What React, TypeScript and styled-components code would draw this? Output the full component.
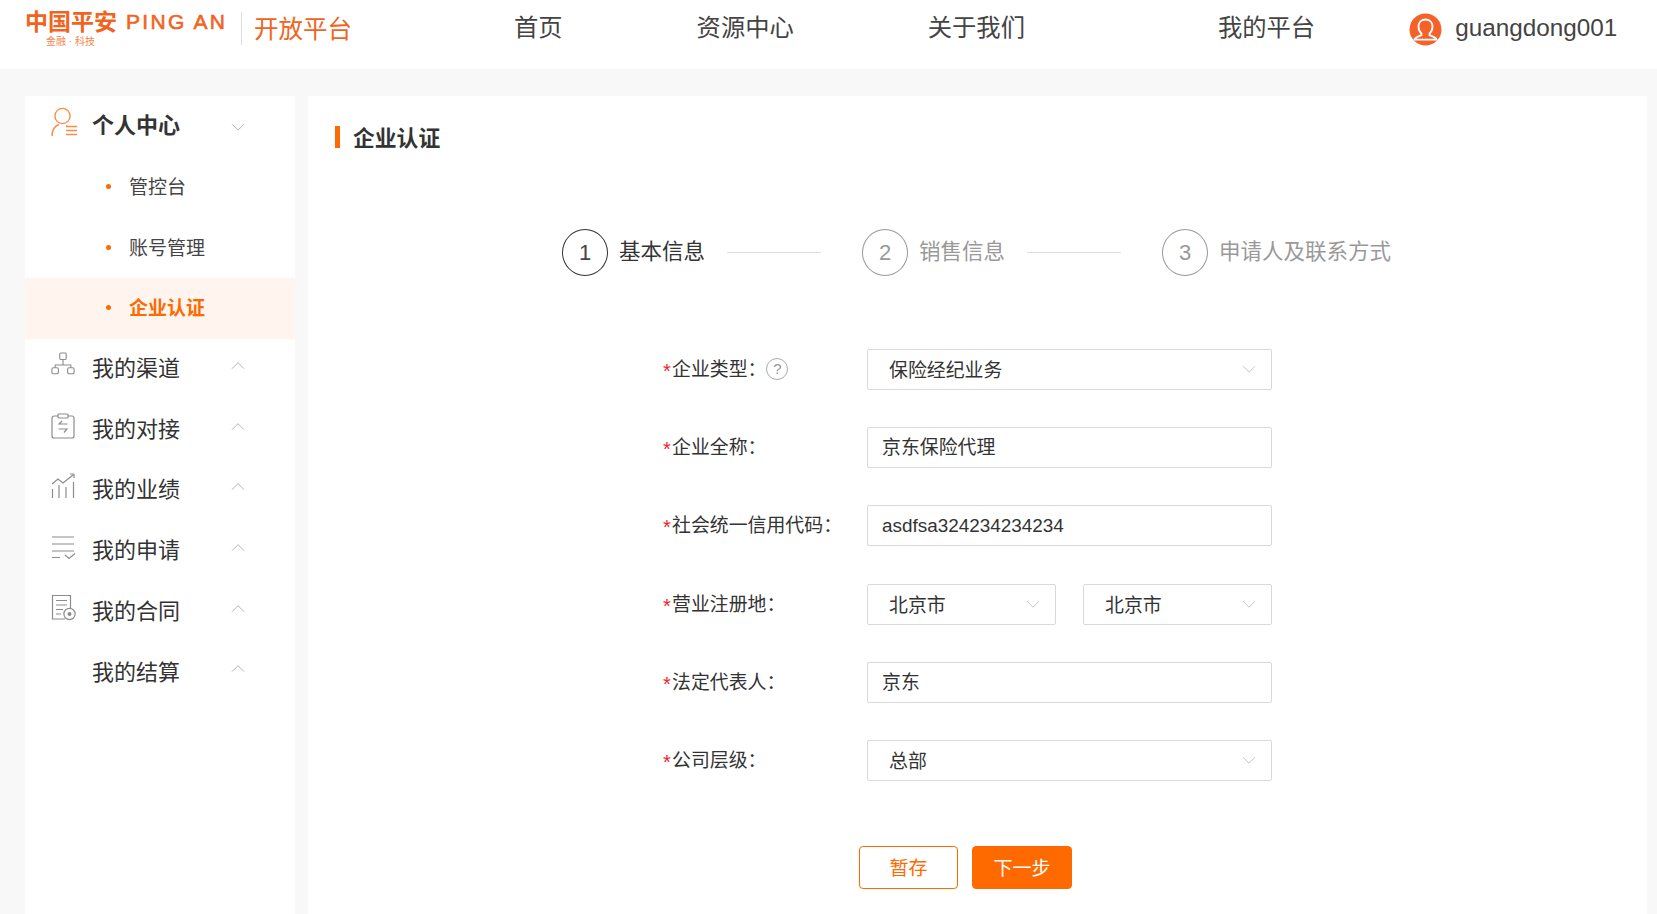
import React from "react";
import styled, { createGlobalStyle } from "styled-components";

const orange = "#ff6a00";

const GlobalStyle = createGlobalStyle`
    html, body {
        margin: 0;
        padding: 0;
        height: 100%;
        overflow: hidden;
        background: #f8f8f8;
        font-family: "Liberation Sans", "Noto Sans CJK SC", sans-serif;
        color: #333;
    }
    * { box-sizing: border-box; }
`;

const Chevron = ({ up, color = "#b4b4b4", size = 14 }: { up?: boolean; color?: string; size?: number }) => (
    <svg width={size} height={size * 0.6} viewBox="0 0 14 8" fill="none">
        <path d={up ? "M1 7.5L7 1.5L13 7.5" : "M1 1L7 7L13 1"} stroke={color} strokeWidth="1" />
    </svg>
);

const PersonIcon = () => (
    <svg width="26" height="30" viewBox="0 0 26 30" fill="none" stroke="#ff8a45" strokeWidth="1.4">
        <circle cx="11.5" cy="9" r="7.6" />
        <path d="M1 29c0-6 3-10 7-11.5" />
        <path d="M15 19h1.5M15 23.5h11M15 27.5h11M15 19.5h11" strokeWidth="1.6" />
    </svg>
);

const ChannelIcon = () => (
    <svg width="24" height="26" viewBox="0 0 26 28" fill="none" stroke="#8c8c8c" strokeWidth="1.2">
        <rect x="9.5" y="1" width="7" height="7" rx="1" />
        <path d="M13 8v6M4.5 17v-3h17v3" />
        <rect x="1" y="17" width="7" height="6.5" rx="1.5" />
        <rect x="18" y="17" width="7" height="6.5" rx="1.5" />
    </svg>
);

const ClipIcon = () => (
    <svg width="24" height="26" viewBox="0 0 24 26" fill="none" stroke="#8c8c8c" strokeWidth="1.2">
        <path d="M7 3H3a2 2 0 0 0-2 2v18a2 2 0 0 0 2 2h18a2 2 0 0 0 2-2V5a2 2 0 0 0-2-2h-4" />
        <rect x="7" y="1" width="10" height="4" rx="1" />
        <path d="M16.5 11H8l3-3M7.5 16H16l-3 3.5" />
    </svg>
);

const ChartIcon = () => (
    <svg width="25" height="26" viewBox="0 0 25 26" fill="none" stroke="#8c8c8c" strokeWidth="1.2">
        <path d="M1 11l6-5 5 4 10-8M23 1v4M19 1h4" />
        <path d="M1.5 16v9M8 12v13M15 14v11M22.5 9v16" />
    </svg>
);

const ListCheckIcon = () => (
    <svg width="25" height="25" viewBox="0 0 25 25" fill="none" stroke="#8c8c8c" strokeWidth="1.2">
        <path d="M1 2h22M1 9h22M1 16h22M1 22.5h8M14 20l4 3.5 6-5" />
    </svg>
);

const ContractIcon = () => (
    <svg width="25" height="27" viewBox="0 0 25 27" fill="none" stroke="#8c8c8c" strokeWidth="1.2">
        <path d="M14 25H1.5V1.5h18V14" />
        <path d="M5 6.5h11M5 11h11M5 15.5h7M5 20h5" />
        <circle cx="18.5" cy="20" r="5.6" />
        <circle cx="18.5" cy="20" r="2" fill="#8c8c8c" stroke="none" />
    </svg>
);

const AvatarIcon = () => (
    <svg width="33" height="33" viewBox="0 0 33 33">
        <circle cx="16.5" cy="16.5" r="16" fill="#f4622a" />
        <path
            d="M16.5 6.5c-4.4 0-7 3.2-7 7.2 0 3 1.3 5.3 3 6.8v1.6c-2.5 1-5.4 2.2-6.6 3.6l-.4 1h22l-.4-1c-1.2-1.4-4.1-2.6-6.6-3.6v-1.6c1.7-1.5 3-3.8 3-6.8 0-4-2.6-7.2-7-7.2z"
            fill="none"
            stroke="#fff"
            strokeWidth="1.8"
        />
    </svg>
);

const menuGroups = [
    { name: "我的渠道", icon: <ChannelIcon /> },
    { name: "我的对接", icon: <ClipIcon /> },
    { name: "我的业绩", icon: <ChartIcon /> },
    { name: "我的申请", icon: <ListCheckIcon /> },
    { name: "我的合同", icon: <ContractIcon /> },
    { name: "我的结算", icon: null },
];

const steps = [
    { no: 1, name: "基本信息", active: true },
    { no: 2, name: "销售信息" },
    { no: 3, name: "申请人及联系方式" },
];

const App: React.FC = () => {
    return (
        <Page>
            <GlobalStyle />
            <Header>
                <Logo>
                    <LogoMain>
                        <LogoRow>
                            <LogoCn>中国平安</LogoCn>
                            <LogoEn>PING AN</LogoEn>
                        </LogoRow>
                        <LogoSub>金融 · 科技</LogoSub>
                    </LogoMain>
                    <LogoDivider />
                    <Platform>开放平台</Platform>
                </Logo>
                <Nav>
                    <NavItem>首页</NavItem>
                    <NavItem>资源中心</NavItem>
                    <NavItem>关于我们</NavItem>
                    <NavItem wide>我的平台</NavItem>
                </Nav>
                <User>
                    <AvatarIcon />
                    <UserName>guangdong001</UserName>
                </User>
            </Header>
            <Body>
                <Sidebar>
                    <MenuRow>
                        <MenuIcon><PersonIcon /></MenuIcon>
                        <MenuTitle strong>个人中心</MenuTitle>
                        <MenuArrow><Chevron /></MenuArrow>
                    </MenuRow>
                    <SubRow><SubText>管控台</SubText></SubRow>
                    <SubRow><SubText>账号管理</SubText></SubRow>
                    <SubRow active><SubText>企业认证</SubText></SubRow>
                    {menuGroups.map((group) => (
                        <MenuRow key={group.name}>
                            <MenuIcon>{group.icon}</MenuIcon>
                            <MenuTitle>{group.name}</MenuTitle>
                            <MenuArrow up><Chevron up /></MenuArrow>
                        </MenuRow>
                    ))}
                </Sidebar>
                <Main>
                    <Title>企业认证</Title>
                    <Steps>
                        {steps.map((step, i) => (
                            <React.Fragment key={step.no}>
                                <StepCircle active={step.active}>{step.no}</StepCircle>
                                <StepName active={step.active}>{step.name}</StepName>
                                {i < steps.length - 1 && <StepLine />}
                            </React.Fragment>
                        ))}
                    </Steps>
                    <Form>
                        <FormRow>
                            <Label><Star>*</Star>企业类型：<HelpCircle>?</HelpCircle></Label>
                            <Select><SelectText>保险经纪业务</SelectText><Chevron color="#c0c4cc" /></Select>
                        </FormRow>
                        <FormRow>
                            <Label><Star>*</Star>企业全称：</Label>
                            <Input>京东保险代理</Input>
                        </FormRow>
                        <FormRow>
                            <Label><Star>*</Star>社会统一信用代码：</Label>
                            <Input>asdfsa324234234234</Input>
                        </FormRow>
                        <FormRow>
                            <Label><Star>*</Star>营业注册地：</Label>
                            <SelectPair>
                                <Select half><SelectText>北京市</SelectText><Chevron color="#c0c4cc" /></Select>
                                <Select half><SelectText>北京市</SelectText><Chevron color="#c0c4cc" /></Select>
                            </SelectPair>
                        </FormRow>
                        <FormRow>
                            <Label><Star>*</Star>法定代表人：</Label>
                            <Input>京东</Input>
                        </FormRow>
                        <FormRow>
                            <Label><Star>*</Star>公司层级：</Label>
                            <Select><SelectText>总部</SelectText><Chevron color="#c0c4cc" /></Select>
                        </FormRow>
                    </Form>
                    <Actions>
                        <Button>暂存</Button>
                        <Button primary>下一步</Button>
                    </Actions>
                </Main>
            </Body>
        </Page>
    );
};

export default App;

const Page = styled.div`
    height: 914px;
    display: flex;
    flex-direction: column;
    overflow: hidden;
`;
const Header = styled.header`
    height: 69px;
    flex: none;
    background: #fff;
    display: flex;
    align-items: center;
    padding-left: 25px;
`;
const Logo = styled.div`
    width: 489px;
    display: flex;
    align-items: flex-start;
    height: 69px;
    padding-top: 12px;
`;
const LogoMain = styled.div`
    width: 216px;
    display: flex;
    flex-direction: column;
`;
const LogoRow = styled.div`
    display: flex;
    align-items: center;
    height: 18px;
    margin-top: 1px;
    white-space: nowrap;
    color: #f0641e;
    font-weight: 700;
`;
const LogoCn = styled.span`
    font-size: 23px;
    line-height: 18px;
`;
const LogoEn = styled.span`
    margin-left: 9px;
    font-size: 21px;
    line-height: 18px;
    font-weight: 400;
    letter-spacing: 2.3px;
    -webkit-text-stroke: 0.6px #f0641e;
`;
const LogoSub = styled.div`
    margin: 5px 0 0 21px;
    font-size: 10px;
    line-height: 12px;
    color: #f2864d;
    white-space: nowrap;
`;
const LogoDivider = styled.div`
    width: 1px;
    height: 33px;
    background: #ddd;
    margin-right: 12px;
`;
const Platform = styled.div`
    font-size: 24.5px;
    line-height: 34px;
    margin-top: 1px;
    color: #f0641e;
    white-space: nowrap;
`;
const Nav = styled.nav`
    display: flex;
    gap: 134px;
    margin-bottom: 13px;
`;
const NavItem = styled.div<{ wide?: boolean }>`
    font-size: 24.3px;
    line-height: 36px;
    color: #444;
    white-space: nowrap;
    margin-left: ${(props) => (props.wide ? "59px" : "0")};
`;
const User = styled.div`
    margin-left: 94px;
    margin-bottom: 10px;
    display: flex;
    align-items: center;
    gap: 13px;
`;
const UserName = styled.div`
    font-size: 24.3px;
    color: #444;
    margin-top: -4px;
`;
const Body = styled.div`
    flex: 1;
    display: flex;
    gap: 13px;
    padding: 27px 10px 0 25px;
`;
const Sidebar = styled.aside`
    width: 270px;
    flex: none;
    background: #fff;
`;
const MenuRow = styled.div`
    height: 60.7px;
    display: flex;
    align-items: center;
    padding-right: 50px;
    padding-left: 26px;
`;
const MenuIcon = styled.div`
    width: 41px;
    height: 32px;
    flex: none;
    display: flex;
    align-items: center;
    margin-top: -8px;
`;
const MenuTitle = styled.div<{ strong?: boolean }>`
    flex: 1;
    font-size: 22px;
    line-height: 30px;
    color: #333;
    font-weight: ${(props) => (props.strong ? 700 : 400)};
`;
const MenuArrow = styled.span<{ up?: boolean }>`
    display: flex;
    margin-top: ${(props) => (props.up ? "-8px" : "1px")};
`;
const SubRow = styled.div<{ active?: boolean }>`
    height: 60.7px;
    position: relative;
    display: flex;
    align-items: center;
    padding-left: 104px;
    font-size: 19px;
    font-weight: ${(props) => (props.active ? 700 : 400)};
    color: ${(props) => (props.active ? orange : "#444")};
    background: ${(props) => (props.active ? "#fff5ee" : "transparent")};

    &::before {
        content: "";
        position: absolute;
        left: 81px;
        top: 50%;
        width: 5px;
        height: 5px;
        margin-top: -3px;
        border-radius: 50%;
        background: ${orange};
    }
`;
const SubText = styled.span`
    margin-top: -3px;
`;
const Main = styled.main`
    flex: 1;
    background: #fff;
    padding-top: 30px;
`;
const Title = styled.h2`
    margin: 0 0 0 27px;
    padding-left: 13px;
    border-left: 5px solid ${orange};
    height: 22px;
    line-height: 26px;
    font-size: 21.8px;
    font-weight: 700;
    color: #333;
`;
const Steps = styled.div`
    margin: 81px 0 0 254px;
    display: flex;
    align-items: center;
`;
const StepCircle = styled.div<{ active?: boolean }>`
    width: 46px;
    height: 47px;
    flex: none;
    border-radius: 50%;
    border: 1px solid ${(props) => (props.active ? "#333" : "#999")};
    color: ${(props) => (props.active ? "#444" : "#999")};
    display: flex;
    align-items: center;
    justify-content: center;
    font-size: 22px;
`;
const StepName = styled.div<{ active?: boolean }>`
    margin-left: 11px;
    width: 88px;
    font-size: 21.5px;
    line-height: 30px;
    margin-top: -2px;
    color: ${(props) => (props.active ? "#333" : "#999")};
    white-space: nowrap;
`;
const StepLine = styled.div`
    width: 94px;
    height: 1px;
    background: #ddd;
    margin: 0 41px 0 20px;
`;
const Form = styled.div`
    margin: 73px 0 0 355px;
    display: flex;
    flex-direction: column;
    gap: 37.2px;
`;
const FormRow = styled.div`
    display: flex;
    align-items: center;
`;
const Label = styled.div`
    width: 204px;
    flex: none;
    display: flex;
    align-items: center;
    font-size: 18.9px;
    color: #333;
    white-space: nowrap;
    margin-top: -4px;
`;
const Star = styled.span`
    color: #f5222d;
    font-size: 20px;
    line-height: 20px;
    margin-top: 7px;
    width: 9px;
`;
const HelpCircle = styled.span`
    width: 22px;
    height: 22px;
    margin-top: 2px;
    border-radius: 50%;
    border: 1px solid #aaa;
    color: #999;
    font-size: 15px;
    display: flex;
    align-items: center;
    justify-content: center;
`;
const Input = styled.div`
    width: 405px;
    height: 41px;
    border: 1px solid #d9d9d9;
    border-radius: 2px;
    background: #fff;
    font-size: 18.9px;
    line-height: 40px;
    color: #333;
    padding-left: 14px;
`;
const Select = styled.div<{ half?: boolean }>`
    width: ${(props) => (props.half ? "189px" : "405px")};
    height: 41px;
    border: 1px solid #d9d9d9;
    border-radius: 2px;
    background: #fff;
    font-size: 18.9px;
    color: #333;
    display: flex;
    align-items: center;
    justify-content: space-between;
    padding: 0 15px 0 21px;
`;
const SelectText = styled.span`
    white-space: nowrap;
    margin-top: -2px;
`;
const SelectPair = styled.div`
    width: 405px;
    display: flex;
    gap: 27px;
`;
const Actions = styled.div`
    margin: 65px 0 0 551px;
    display: flex;
    gap: 14px;
`;
const Button = styled.button<{ primary?: boolean }>`
    width: ${(props) => (props.primary ? "100px" : "99px")};
    height: 43px;
    border-radius: 4px;
    border: 1px solid ${orange};
    background: ${(props) => (props.primary ? orange : "#fff")};
    color: ${(props) => (props.primary ? "#fff" : orange)};
    font-family: inherit;
    font-size: 19px;
    padding: 0 0 2px;
`;
